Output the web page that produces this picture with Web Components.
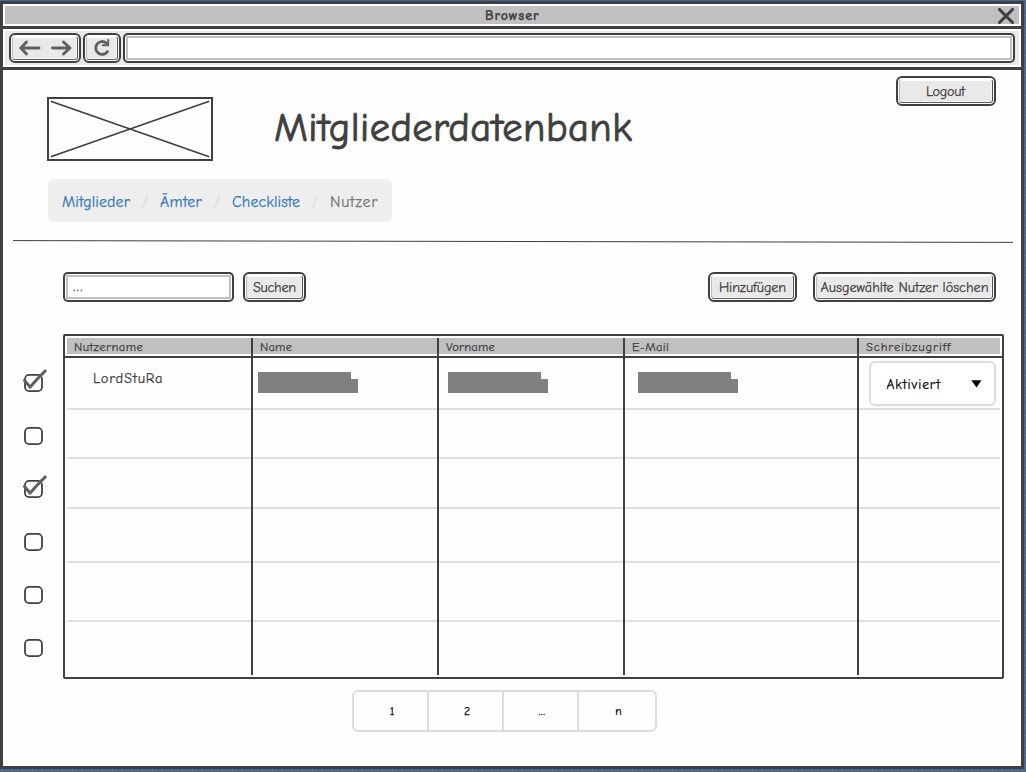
<!DOCTYPE html>
<html lang="de">
<head>
<meta charset="utf-8">
<title>Mitgliederdatenbank</title>
<style>
html,body{margin:0;height:100%;overflow:hidden}
body{font-family:"Comic Sans MS","Comic Neue","Open Sans","Noto Sans",sans-serif;color:#404040}
</style>
</head>
<body>
<app-window></app-window>
<script>
const define = (name, html, setup) => customElements.define(name, class extends HTMLElement {
  connectedCallback() {
    if (this.shadowRoot) return;
    const root = this.attachShadow({mode: 'open'});
    const t = document.createElement('template');
    t.innerHTML = html;
    root.append(t.content.cloneNode(true));
    if (setup) setup(this, root);
  }
});

// Text run tracked out to a given width: <fit-text w="68" s="15">
define('fit-text', `<style>
:host{display:block;flex:none;white-space:pre;line-height:20px}
span{display:inline-block;-webkit-text-stroke:var(--weight,.25px) currentColor}
</style><span><slot></slot></span>`, (el, root) => {
  const w = +el.getAttribute('w');
  el.style.fontSize = el.getAttribute('s') + 'px';
  if (!w) return;
  el.style.width = w + 'px';
  const span = root.querySelector('span');
  const n = el.textContent.length;
  span.style.letterSpacing = ((w - span.getBoundingClientRect().width) / (n - .5)) + 'px';
});

define('sketch-button', `<style>
:host{display:block;box-sizing:border-box;height:30px;border:2px solid #404040;border-radius:6px;padding:1px;background:#fff;flex:none}
div{box-sizing:border-box;height:24px;border:1px solid #bbb;border-top-color:#fff;border-right-color:#505050;border-bottom-color:#606060;border-radius:3px;background:#e9e9e9;display:flex;align-items:center;justify-content:center;box-shadow:inset 0 1px #fff,inset -1px -1px #f4f4f4}
::slotted(fit-text){margin-top:2px}
</style><div><slot></slot></div>`);

define('sketch-field', `<style>
:host{display:block;box-sizing:border-box;height:30px;border:2px solid #404040;border-radius:5px;padding:1px;background:#fff;flex:none}
div{box-sizing:border-box;height:24px;border:2px solid #c0c0c0;padding:0 5px;display:flex;align-items:center}
</style><div><slot></slot></div>`);

define('sketch-check', `<style>
:host{display:block;width:27px;height:25px}
svg{display:block;overflow:visible}
.m{display:none}
:host([checked]) .m{display:inline}
</style><svg width="27" height="25" fill="none"><rect x="5" y="5.9" width="17" height="16.2" rx="4.2" stroke="#404040" stroke-width="1.8"/><path class="m" d="M4.4 11.3L10.2 18.2Q15.5 11.5 25.3 1.9" stroke="#606060" stroke-width="2.9" stroke-linecap="round" stroke-linejoin="round"/></svg>`);

define('redacted-bar', `<style>
:host{display:block;width:100px;height:21px;background:#808080;clip-path:polygon(0 0,93px 0,93px 7px,100% 7px,100% 100%,0 100%)}
</style>`);

define('table-column', `<style>
:host{display:block;box-sizing:border-box;border-left:2px solid #404040}
:host([first]){border-left:0}
.h{height:16px;background:#c0c0c0;box-sizing:border-box;padding-left:7px}
.r{margin-top:2px;height:2px;background:#404040;box-shadow:-2px 0 #404040,2px 0 #404040}
.h ::slotted(*){line-height:18px!important}
.c{box-sizing:border-box;border-bottom:2px solid #dfdfdf}
.c:last-child{border:0}
</style><div class="h"><slot name="head"></slot></div><div class="r"></div>
<div class="c" style="height:52px"><slot></slot></div><div class="c" style="height:49px"></div><div class="c" style="height:50px"></div><div class="c" style="height:54px"></div><div class="c" style="height:59px"></div><div class="c" style="height:53px"></div>`);

define('user-table', `<style>
:host{display:grid;box-sizing:border-box;width:941px;height:345px;border:2px solid #404040;border-radius:2px;padding:2px;grid-template-columns:184px 186px 186px 234px 143px}
.n{padding:11px 0 0 26px}
.b1{padding:14px 0 0 5px}.b2{padding:14px 0 0 9px}.b3{padding:14px 0 0 13px}
.p{padding:3px 0 0 10px}
.s{box-sizing:border-box;width:127px;height:45px;border:2px solid #ddd;border-radius:6px;background:#fff;display:flex;align-items:center;justify-content:space-between;padding:0 12.5px 0 15.5px;color:#000}
.s fit-text{margin-top:2px}
</style>
<table-column first><fit-text slot="head" w="69" s="12.5">Nutzername</fit-text><div class="n"><fit-text w="70" s="14.5">LordStuRa</fit-text></div></table-column>
<table-column><fit-text slot="head" w="32" s="12.5">Name</fit-text><div class="b1"><redacted-bar></redacted-bar></div></table-column>
<table-column><fit-text slot="head" w="49" s="12.5">Vorname</fit-text><div class="b2"><redacted-bar></redacted-bar></div></table-column>
<table-column><fit-text slot="head" w="37" s="12.5">E-Mail</fit-text><div class="b3"><redacted-bar></redacted-bar></div></table-column>
<table-column><fit-text slot="head" w="85" s="12.5">Schreibzugriff</fit-text><div class="p"><div class="s"><fit-text w="54" s="13.6">Aktiviert</fit-text><svg width="11" height="8"><path d="M.3.3H10.5L5.5 7.5Z"/></svg></div></div></table-column>`);

define('page-switch', `<style>
:host{display:flex;box-sizing:border-box;width:305px;height:42px;border:2px solid #ddd;border-radius:6px;color:#000;font-size:11.5px;line-height:40px;text-align:center;-webkit-text-stroke:.25px #000}
b{font-weight:400;width:75px;height:38px;box-sizing:border-box;border-right:2px solid #ddd;padding-left:3px}
b:last-child{border:0;width:76px;padding-left:3px}
.d{letter-spacing:.6px}
</style><b>1</b><b>2</b><b class="d">...</b><b>n</b>`);

define('bread-crumbs', `<style>
:host{display:flex;box-sizing:border-box;width:344px;height:43px;border-radius:6px;background:#eee;align-items:center;padding:2px 14px 0;color:#337ab7}
i{flex:1;font-style:normal;color:#d0d0d0;font-size:14px;text-align:center;line-height:20px}
.a{color:#777}
</style><fit-text w="68" s="15.8">Mitglieder</fit-text><i>/</i><fit-text w="42" s="15.8">Ämter</fit-text><i>/</i><fit-text w="68" s="15.8">Checkliste</fit-text><i>/</i><fit-text class="a" w="48" s="15.8">Nutzer</fit-text>`);

define('app-window', `<style>
:host{display:block;box-sizing:border-box;width:1026px;height:772px;padding:1px 2px 3px 0;background:repeating-linear-gradient(90deg,transparent 0 2px,#54769f 2px 3px,transparent 3px 10px) 0 100%/100% 3px no-repeat,repeating-linear-gradient(transparent 0 5px,#54769f 5px 6px,transparent 6px 10px),#47698f}
.win{box-sizing:border-box;height:768px;border:3px solid #404040;background:#fefefe}
.bar{box-sizing:border-box;height:22px;border:2px solid #fff;background:#c0c0c0;display:grid;grid-template-columns:1fr auto 1fr;align-items:center}
.bar svg{justify-self:end;margin-right:4px;margin-top:-1px}
.title{font-weight:700}
.nav{box-sizing:border-box;height:44px;border:solid #404040;border-width:3px 0;background:#e9e9e9;box-shadow:inset 0 2px #fff,inset 0 -2px #fff,inset 2px 0 #fff,inset -2px 0 #fff;display:flex;gap:2px;padding:4px 6px}
header{display:flex;align-items:flex-start;height:109px;padding:0 25px 0 44px}
.logo{margin-top:27px}
h1{margin:48px 0 0 61px;font-weight:400;font-size:40px;--weight:.9px}
.out{margin:6px 0 0 auto;width:100px}
.out fit-text{margin-right:1px}
bread-crumbs{margin-left:45px}
.rule{display:block;margin:18px 0 29px 10px}
.tools{display:flex;padding:0 25px 0 60px}
.main{display:flex;margin-top:32px;height:345px}
.checks{width:60px;box-sizing:border-box;padding:35px 0 0 17px;display:grid;grid-auto-rows:53px;align-content:start}
page-switch{margin:11px 0 0 349px}
svg{display:block}
</style>
<div class="win">
<div class="bar"><span></span><fit-text class="title" w="54" s="14">Browser</fit-text><svg width="18" height="18" stroke="#404040" stroke-width="3.1" stroke-linecap="round"><path d="M2.5 2.5L15.5 15.5M15.5 2.5L2.5 15.5"/></svg></div>
<div class="nav">
<sketch-button style="width:72px"><svg width="56" height="18" fill="none" stroke="#606060" stroke-width="2.9" stroke-linecap="round" stroke-linejoin="round"><path d="M9.5 3L3.8 9L9.5 15M4 9H22M46.5 3L53 9L46.5 15M35.5 9H52.5"/></svg></sketch-button>
<sketch-button style="width:38px"><svg width="20" height="20" fill="none" stroke="#606060" stroke-width="2.9" stroke-linecap="round" stroke-linejoin="round"><path d="M15.4 13.6A6.4 6.4 0 1 1 14.2 5"/><path d="M16.2 2V7.2H10.8" stroke-width="2"/></svg></sketch-button>
<sketch-field style="width:892px"></sketch-field>
</div>
<header>
<svg class="logo" width="166" height="64" fill="none" stroke="#404040" stroke-width="2"><rect x="1" y="1" width="164" height="62"/><path d="M4.5 4.5L161.5 59.5M161.5 4.5L4.5 59.5" stroke-linecap="round" stroke-width="1.8"/></svg>
<h1><fit-text w="358" s="40.5">Mitgliederdatenbank</fit-text></h1>
<sketch-button class="out"><fit-text w="39" s="14.2">Logout</fit-text></sketch-button>
</header>
<bread-crumbs></bread-crumbs>
<svg class="rule" width="1000" height="3"><path d="M0 .6L1000 2.4" stroke="#404040"/></svg>
<div class="tools">
<sketch-field style="width:171px"><fit-text w="10" s="14.2">...</fit-text></sketch-field>
<sketch-button style="width:63px;margin-left:9px"><fit-text w="43" s="14.2">Suchen</fit-text></sketch-button>
<sketch-button style="width:89px;margin-left:auto"><fit-text w="67" s="14.2">Hinzufügen</fit-text></sketch-button>
<sketch-button style="width:183px;margin-left:16px"><fit-text w="168" s="14.2">Ausgewählte Nutzer löschen</fit-text></sketch-button>
</div>
<div class="main">
<div class="checks"><sketch-check checked></sketch-check><sketch-check></sketch-check><sketch-check checked></sketch-check><sketch-check></sketch-check><sketch-check></sketch-check><sketch-check></sketch-check></div>
<user-table></user-table>
</div>
<page-switch></page-switch>
</div>`);
</script>
</body>
</html>
